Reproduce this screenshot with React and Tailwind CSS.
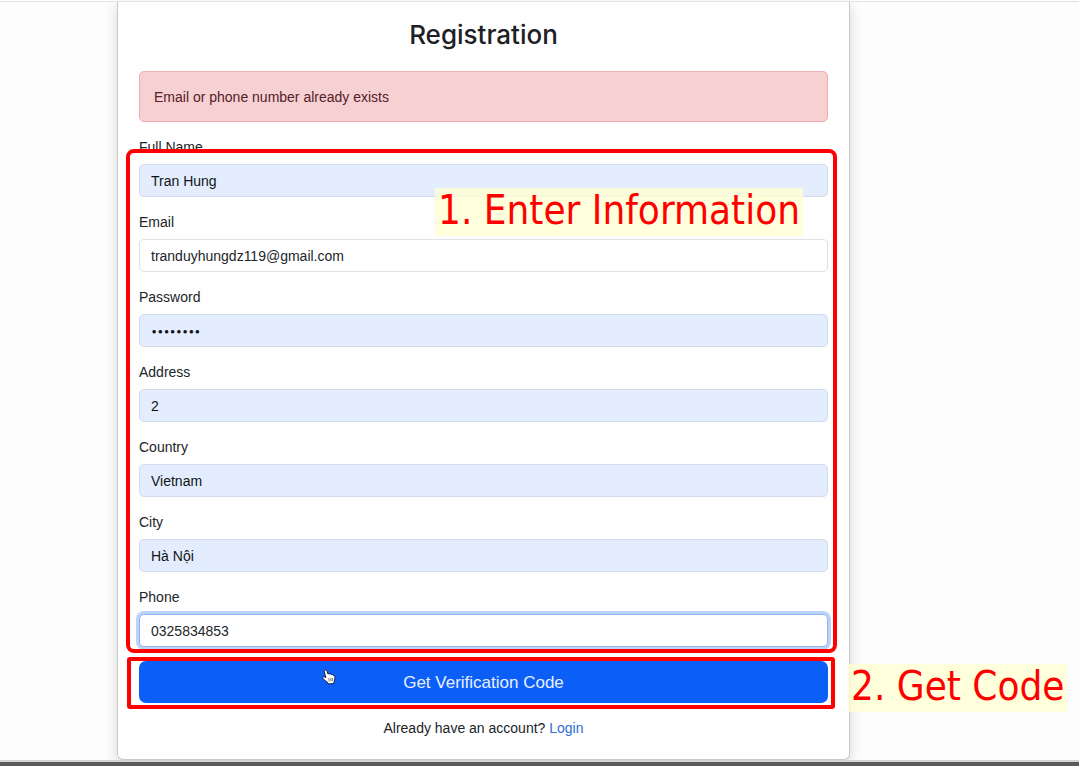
const fields = [
  { id: "name", label: "Full Name", type: "text", value: "Tran Hung", filled: true },
  { id: "email", label: "Email", type: "email", value: "tranduyhungdz119@gmail.com" },
  { id: "password", label: "Password", type: "password", value: "12345678", filled: true },
  { id: "address", label: "Address", type: "text", value: "2", filled: true },
  { id: "country", label: "Country", type: "text", value: "Vietnam", filled: true },
  { id: "city", label: "City", type: "text", value: "Hà Nội", filled: true },
  { id: "phone", label: "Phone", type: "tel", value: "0325834853", active: true },
];

function Field({ id, label, type, value, filled, active }) {
  const tone = filled ? "bg-[#e4edfe] text-[#111418]" : "bg-white text-[#212529]";
  const size = type === "password" ? "font-[Inter,sans-serif] text-[11px]" : "text-[14px]";
  const edge = active
    ? "border-[#8fb5ee] ring-3 ring-[#bdd3fb]"
    : filled
      ? "border-[#d3dcec]"
      : "border-[#dee2e6]";
  return (
    <div className="flex flex-col gap-[5px]">
      <label htmlFor={id} className="self-start leading-[23px]">{label}</label>
      <input
        id={id}
        type={type}
        defaultValue={value}
        className={`h-[33px] w-full rounded-[5px] border px-[11px] outline-none ${size} ${tone} ${edge}`}
      />
    </div>
  );
}

function Callout({ className, children }) {
  return (
    <div
      className={`pointer-events-none absolute h-12 whitespace-nowrap bg-[#ffffd2]/80 px-[3px] font-['DejaVu_Sans_Condensed','DejaVu_Sans',sans-serif] text-[40px] leading-[44px] text-[#ff0000] ${className}`}
    >
      {children}
    </div>
  );
}

function HandCursor() {
  return (
    <svg
      className="pointer-events-none absolute top-2 left-[183px] h-[16px] w-[14px]"
      viewBox="0 0 14 16"
      aria-hidden="true"
    >
      <path
        d="M3.2 1.2c.8-.4 1.5.1 1.8.9l1 3c.3-.6 1.5-.6 1.8.1.6-.5 1.5-.3 1.8.5.7-.4 1.6 0 1.9.8.6-.2 1.3.2 1.3.9.1 1.9.2 3.4-.7 5l-.1 2.1-5.6.5-.4-1.200C4.600 12.900 3.200 11.500 1.400 10c-.8-.7-.9-1.600-.3-2 .7-.5 1.700-.2 2.700.7L2.300 2.600c-.1-.6.3-1.200.9-1.400z"
        fill="#fff"
        stroke="#14213d"
        strokeWidth="1"
        strokeLinejoin="round"
      />
      <path d="M6.800 9.200l.5 3.300M8.700 9l.4 3.300M10.500 8.900l.2 3.300" stroke="#555" strokeWidth=".8" />
    </svg>
  );
}

export default function App() {
  return (
    <div className="flex min-h-screen flex-col overflow-hidden bg-[#fdfdfd] font-['Liberation_Sans',sans-serif] text-[14px] text-[#212529]">
      <div className="h-px" />
      <div className="relative z-10 h-px bg-[#dfe6e4]" />
      <main className="mr-[229px] ml-[117px] rounded-b-[6px] border border-t-0 border-[#c9c9c9] bg-[#fefefe] px-[21px] pt-[17px] pb-[19px] shadow-[0_4px_14px_rgba(0,0,0,0.16)]">
        <h1 className="text-center font-[Inter,sans-serif] text-[26px] leading-8 font-medium text-[#1d2024]">Registration</h1>
        <div
          role="alert"
          className="mt-5 flex h-[51px] items-center rounded-[5px] border border-[#efadb4] bg-[#f7d0d2] px-[14px] pt-[2px] text-[#55202a]"
        >
          Email or phone number already exists
        </div>
        <form className="mt-[14px]" onSubmit={(e) => e.preventDefault()}>
          <div className="relative flex flex-col gap-[14px]">
            {fields.map((f) => (
              <Field key={f.id} {...f} />
            ))}
            <div className="pointer-events-none absolute top-[13px] -right-[9px] -bottom-[6px] -left-[13px] rounded-lg border-4 border-[#ff0000]" />
            <Callout className="top-[52px] right-[25px]">1. Enter Information</Callout>
          </div>
          <div className="relative mt-[14px]">
            <button
              type="submit"
              className="block h-[42px] w-full rounded-[7px] bg-[#0b5ff6] pt-[2px] text-[17px] text-[#e8f0ff]"
            >
              Get Verification Code
            </button>
            <HandCursor />
            <div className="pointer-events-none absolute -top-1 -right-[7px] -bottom-[6px] -left-3 rounded-[3px] border-4 border-[#ff0000]" />
            <Callout className="top-[3px] left-full ml-[20px]">2. Get Code</Callout>
          </div>
        </form>
        <p className="mt-[14px] text-center leading-[23px]">
          Already have an account?{" "}
          <a href="#login" className="text-[#2f6fd6]">Login</a>
        </p>
      </main>
      <div className="mt-auto h-[6px] border-t-2 border-[#d4d4d4] bg-[#5a5a5a]" />
    </div>
  );
}
